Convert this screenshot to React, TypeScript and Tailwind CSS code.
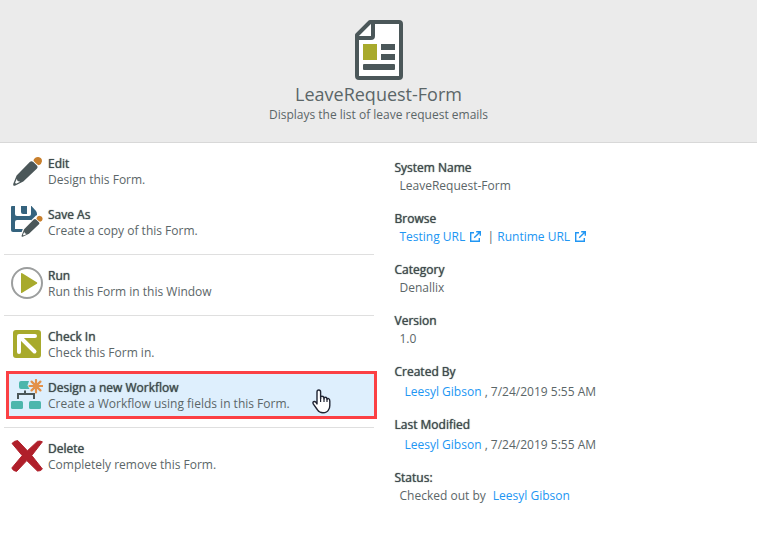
import type { ReactNode } from "react";

type Action = {
  title: string;
  description: string;
  icon: ReactNode;
  active?: boolean;
};

// ── Icons ──────────────────────────────
function FormIcon() {
  return (
    <svg width="48" height="60" viewBox="0 0 48 60" aria-hidden="true">
      <path d="M15 2H44a2 2 0 0 1 2 2V56a2 2 0 0 1-2 2H4a2 2 0 0 1-2-2V15Z" fill="#fff" stroke="#4b5759" strokeWidth="4" strokeLinejoin="round" />
      <path d="M18 3V16a2 2 0 0 1-2 2H3" fill="none" stroke="#4b5759" strokeWidth="4" />
      <path d="M8 24h14v16H8z" fill="#a8aa2c" />
      <path d="M26 24h14v6H26zM26 34h14v6H26z" fill="#4b5759" />
      <rect x="8" y="44" width="32" height="6" rx="1" fill="#4b5759" />
    </svg>
  );
}

function PencilShape() {
  return (
    <>
      <path d="M18.8 6.3Q20.3 4.6 22 6L25.9 9.8Q27.4 11.3 26 12.8L12.3 25.6 4.4 29.6Q1.4 30.8 2.3 28L5.6 19.6Z" fill="#4b5759" />
      <path d="M5.8 22.9 6.6 25.1 9.2 26 5 28 4.1 27Z" fill="#fff" />
      <path d="M22.4 4.4Q24.2 1 27.2 1.2 31 1.8 31 5.4 30.8 8 27.8 9.4Q25.8 8.6 24.6 7.2Q22.8 5.6 22.4 4.4Z" fill="#c87f2c" />
    </>
  );
}

function EditIcon() {
  return (
    <svg width="32" height="32" viewBox="0 0 32 32" aria-hidden="true">
      <g transform="translate(0 .8)">
        <PencilShape />
      </g>
    </svg>
  );
}

function SaveAsIcon() {
  return (
    <svg width="32" height="32" viewBox="0 0 32 32" aria-hidden="true">
      <path d="M0 1Q0 0 1 0H20.5L25 5Q26 6.4 26 8V24Q26 26 24 26H2Q0 26 0 24Z" fill="#35637e" />
      <path d="M4 0h16v8q0 2-2 2H6q-2 0-2-2Z" fill="#fff" />
      <path d="M10 0h6v8h-4q-2 0-2-2Z" fill="#35637e" />
      <path d="M6 14h14v9H4v-7q0-2 2-2Z" fill="#fff" />
      <path d="M8.5 32 12 22.5 25 9.5 32 7V32Z" fill="#fff" />
      <g transform="translate(9 9) scale(.73)">
        <PencilShape />
      </g>
    </svg>
  );
}

function RunIcon() {
  return (
    <svg width="32" height="32" viewBox="0 0 32 32" aria-hidden="true">
      <circle cx="16" cy="16" r="15" fill="#fff" stroke="#9c9e9e" strokeWidth="2" />
      <path d="M10 6.8v18.4q0 1.3 1.2.6L25.8 16.8q1-.8 0-1.6L11.2 6.2q-1.2-.7-1.2.6Z" fill="#a8aa2c" />
    </svg>
  );
}

function CheckInIcon() {
  return (
    <svg width="32" height="32" viewBox="0 0 32 32" aria-hidden="true">
      <rect x="2" y="2" width="28" height="28" rx="3" fill="#a8aa2c" />
      <path d="M24 8H8V24M9 9 23.5 23.5" fill="none" stroke="#fff" strokeWidth="4" strokeLinecap="round" strokeLinejoin="round" />
    </svg>
  );
}

function WorkflowIcon() {
  return (
    <svg width="32" height="32" viewBox="0 0 32 32" aria-hidden="true">
      <path d="M10 2h8l-1.5 4.5 2 3.5H10q-2 0-2-2V4q0-2 2-2Z" fill="#4db6ac" />
      <path d="M14 11.5V15M7 20v-5h16v5" fill="none" stroke="#4b5759" strokeWidth="2" />
      <rect y="22" width="12" height="8" rx="1.5" fill="#4db6ac" />
      <rect x="18" y="22" width="12" height="8" rx="1.5" fill="#4db6ac" />
      <path d="M25 1v12.5M18.5 7h13M20.6 2.6l8.8 8.8M29.4 2.6l-8.8 8.8" stroke="#e3914a" strokeWidth="2.2" strokeLinecap="round" />
    </svg>
  );
}

function DeleteIcon() {
  return (
    <svg width="32" height="32" viewBox="0 0 32 32" aria-hidden="true">
      <path d="M1 3.4Q3.5.6 6.8.6L16.4 10.8 26.4 1.4Q29 .6 31.4 1.8L20.8 15.5 31.4 29Q29.5 31.4 26.4 31L15.8 20.6 5.6 31.4Q2.2 31.2.8 28L11.2 15.6Z" fill="#b01f2a" stroke="#b01f2a" strokeLinejoin="round" />
    </svg>
  );
}

function ExternalIcon() {
  return (
    <svg width="11" height="11" viewBox="0 0 11 11" className="mb-0.5 ml-[5px] inline-block" fill="none" stroke="#2196f3" strokeWidth="1.4" aria-hidden="true">
      <path d="M4 1.7H.7v8.6h8.6V7M6.2.7h4.1v4.1M10 1 4.2 6.8" />
    </svg>
  );
}

function HandCursor() {
  return (
    <svg width="19" height="25" viewBox="0 0 19 25" aria-hidden="true">
      <path
        d="M5 15V3Q5 1 6.8 1T8.6 3V9.5Q8.6 7 10.3 7.2 12 7.3 12 9.8 12.2 8 13.6 8.2 15 8.3 15 10.6 15.4 9.4 16.6 9.6 17.8 9.9 17.8 12V16.5Q17.8 19 16.6 20.7 15 23.8 11 23.8 7.2 23.8 5.6 21L1.4 15.2Q.4 13.4 1.6 12.6 2.9 12 4 13.4L5 15Z"
        fill="#fff"
        stroke="#1f2433"
        strokeWidth="1.4"
        strokeLinejoin="round"
      />
      <path d="M8.6 9v4M12 9.6V13M15 10.4V13" stroke="#1f2433" strokeWidth="1.2" />
    </svg>
  );
}

// ── Data ───────────────────────────────
const ACTION_GROUPS: Action[][] = [
  [
    { title: "Edit", description: "Design this Form.", icon: <EditIcon /> },
    { title: "Save As", description: "Create a copy of this Form.", icon: <SaveAsIcon /> },
  ],
  [{ title: "Run", description: "Run this Form in this Window", icon: <RunIcon /> }],
  [
    { title: "Check In", description: "Check this Form in.", icon: <CheckInIcon /> },
    {
      title: "Design a new Workflow",
      description: "Create a Workflow using fields in this Form.",
      icon: <WorkflowIcon />,
      active: true,
    },
  ],
  [{ title: "Delete", description: "Completely remove this Form.", icon: <DeleteIcon /> }],
];

function ActionItem({ title, description, icon, active }: Action) {
  return (
    <li className={active ? "relative -mr-[3px] pl-0.5" : "pl-0.5"}>
      <button
        type="button"
        className={
          active
            ? "flex h-12 w-full items-center gap-1 border-3 border-[#fb4044] bg-[#deeffd] pl-0.5 text-left"
            : "flex h-12 w-full items-center gap-1 pl-[5px] text-left"
        }
      >
        <span className="w-8 shrink-0">{icon}</span>
        <span className="block pt-0.5 pl-px leading-4">
          <span className="block text-[#3e4a4c] [text-shadow:0_0_1px_#3e4a4c]">{title}</span>
          <span className="block">{description}</span>
        </span>
      </button>
      {active && (
        <span className="pointer-events-none absolute right-[46px] bottom-[5px]">
          <HandCursor />
        </span>
      )}
    </li>
  );
}

function Detail({ label, children, indent }: { label: string; children: ReactNode; indent?: boolean }) {
  return (
    <div>
      <dt className="leading-4 text-[#3e4a4c] [text-shadow:0_0_1px_#3e4a4c]">{label}</dt>
      <dd className={indent ? "mt-[3px] pl-2.5 leading-[18px]" : "mt-px pl-[5px] leading-[18px]"}>{children}</dd>
    </div>
  );
}

function TextLink({ children }: { children: ReactNode }) {
  return (
    <a href="#" className="text-[#2196f3] hover:underline">
      {children}
    </a>
  );
}

export default function App() {
  return (
    <div className="min-h-screen bg-white font-['Open_Sans',sans-serif] text-[12px] text-[#5b6668]">
      {/* ── Header ───────────────────────── */}
      <header className="flex flex-col items-center border-b border-[#d8d8d8] bg-[#ebebeb] pt-5 pb-[19px]">
        <FormIcon />
        <h1 className="mt-0.5 text-[18px] leading-[25px]">LeaveRequest-Form</h1>
        <p className="leading-4">Displays the list of leave request emails</p>
      </header>

      <main className="grid grid-cols-2">
        {/* ── Actions ────────────────────── */}
        <nav className="divide-y divide-[#dfdfdf] pr-[5px] pl-1" aria-label="Form actions">
          {ACTION_GROUPS.map((group) => (
            <ul key={group[0].title} className="space-y-[3px] pt-1 pb-2">
              {group.map((action) => (
                <ActionItem key={action.title} {...action} />
              ))}
            </ul>
          ))}
        </nav>

        {/* ── Details ────────────────────── */}
        <dl className="space-y-4 px-4 pt-[17px]">
          <Detail label="System Name">LeaveRequest-Form</Detail>
          <Detail label="Browse">
            <TextLink>
              Testing URL
              <ExternalIcon />
            </TextLink>
            &nbsp; |{" "}
            <TextLink>
              Runtime URL
              <ExternalIcon />
            </TextLink>
          </Detail>
          <Detail label="Category">Denallix</Detail>
          <Detail label="Version">1.0</Detail>
          <Detail label="Created By" indent>
            <TextLink>Leesyl Gibson</TextLink> , 7/24/2019 5:55 AM
          </Detail>
          <Detail label="Last Modified" indent>
            <TextLink>Leesyl Gibson</TextLink> , 7/24/2019 5:55 AM
          </Detail>
          <Detail label="Status:">
            Checked out by <span className="pl-1"><TextLink>Leesyl Gibson</TextLink></span>
          </Detail>
        </dl>
      </main>
    </div>
  );
}
